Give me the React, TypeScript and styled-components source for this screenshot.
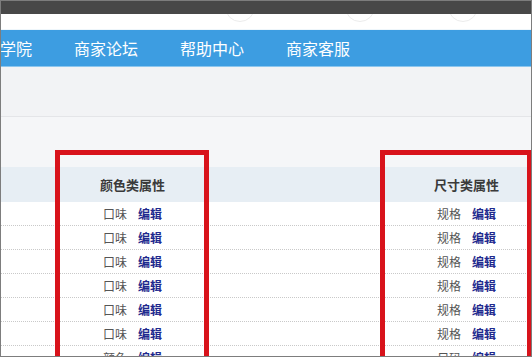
import React from "react";
import styled, { createGlobalStyle } from "styled-components";

const GlobalStyle = createGlobalStyle`
  html, body {
    margin: 0;
    padding: 0;
    background: #fff;
  }
  body {
    font-family: "Noto Sans CJK SC", "Microsoft YaHei", sans-serif;
  }
`;

const Frame = styled.div`
  position: relative;
  width: 532px;
  height: 357px;
  box-sizing: border-box;
  border: 1px solid #7d7d7d;
  overflow: hidden;
  background: #fff;
`;

const TopBar = styled.div`
  height: 13px;
  background: #484848;
`;

const Strip = styled.div`
  height: 15px;
  background: #fff;
  display: flex;
  overflow: hidden;
  border-bottom: 1px solid #eef6fb;
`;

const Circle = styled.div<{ $left: number }>`
  flex: none;
  width: 30px;
  height: 30px;
  margin-top: -22px;
  margin-left: ${(p) => p.$left}px;
  border-radius: 50%;
  border: 1px solid #ececec;
  box-sizing: border-box;
`;

const Nav = styled.nav`
  height: 36px;
  background: #3d9de1;
  border-bottom: 1px solid #8cc6ee;
  display: flex;
  align-items: center;
  gap: 42px;
  padding-left: 0;
  overflow: hidden;
`;

const NavItem = styled.a<{ $shift?: number }>`
  flex: none;
  color: #fff;
  font-size: 16px;
  line-height: 36px;
  text-decoration: none;
  margin-left: ${(p) => p.$shift ?? 0}px;
`;

const GrayBand = styled.div`
  height: 49px;
  background: #f2f3f5;
  border-bottom: 1px solid #e4e5e8;
`;

const TableZone = styled.div`
  padding-top: 50px;
  background: #f5f6f8;
`;

const Grid = styled.div`
  display: grid;
  grid-template-columns: 59px 145px 180px 163px;
`;

const HeadCell = styled.div`
  height: 35px;
  background: #e7eef4;
  display: flex;
  align-items: center;
  justify-content: center;
  font-size: 13px;
  font-weight: 700;
  color: #3a3a3a;
  white-space: nowrap;
`;

const Cell = styled.div`
  height: 23px;
  background: #fff;
  border-bottom: 1px dotted #c9c9c9;
  display: flex;
  align-items: center;
  justify-content: center;
  gap: 11px;
  font-size: 12px;
  color: #555;
  white-space: nowrap;
`;

const Edit = styled.a`
  color: #1f2a8e;
  font-weight: 700;
  text-decoration: none;
`;

const Mark = styled.div<{ $left: number; $width: number }>`
  position: absolute;
  top: 149px;
  left: ${(p) => p.$left - 1}px;
  width: ${(p) => p.$width}px;
  height: 260px;
  box-sizing: border-box;
  border: 5px solid #d8131b;
`;

const rows = [
  ["口味", "规格"],
  ["口味", "规格"],
  ["口味", "规格"],
  ["口味", "规格"],
  ["口味", "规格"],
  ["口味", "规格"],
  ["颜色", "尺码"],
];

export default function App() {
  return (
    <>
      <GlobalStyle />
      <Frame>
        <TopBar />
        <Strip>
          <Circle $left={224} />
          <Circle $left={90} />
          <Circle $left={73} />
        </Strip>
        <Nav>
          <NavItem $shift={-33}>商家学院</NavItem>
          <NavItem>商家论坛</NavItem>
          <NavItem>帮助中心</NavItem>
          <NavItem>商家客服</NavItem>
        </Nav>
        <GrayBand />
        <TableZone>
          <Grid>
            <HeadCell />
            <HeadCell>颜色类属性</HeadCell>
            <HeadCell />
            <HeadCell>尺寸类属性</HeadCell>
            {rows.map(([a, b], i) => (
              <React.Fragment key={i}>
                <Cell />
                <Cell>
                  <span>{a}</span>
                  <Edit>编辑</Edit>
                </Cell>
                <Cell />
                <Cell>
                  <span>{b}</span>
                  <Edit>编辑</Edit>
                </Cell>
              </React.Fragment>
            ))}
          </Grid>
        </TableZone>
        <Mark $left={55} $width={154} />
        <Mark $left={380} $width={152} />
      </Frame>
    </>
  );
}
